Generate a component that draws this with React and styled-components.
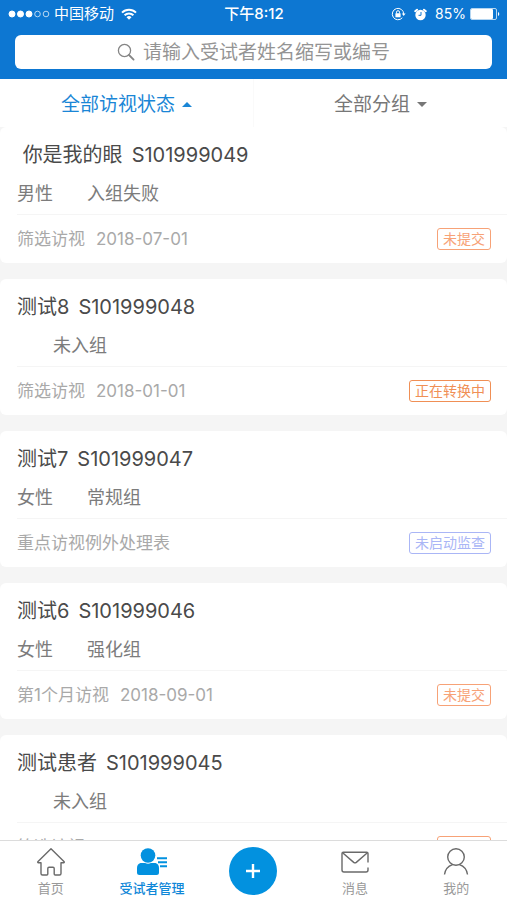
import React, {useState} from 'react';
import styled, {createGlobalStyle} from 'styled-components';

const GlobalStyle = createGlobalStyle`
    * {box-sizing: border-box;}
    body {
        margin: 0;
        font-family: Inter, "Noto Sans CJK SC", sans-serif;
        background-color: #f5f5f5;
    }
    button, input {
        font-family: inherit;
        border: 0;
        padding: 0;
        background: none;
    }
`;

const Screen = styled.div`
    height: 100vh;
    display: flex;
    flex-direction: column;
`;

const Header = styled.header`
    background-color: #0d77d2;
    padding-bottom: 10px;
`;

const StatusBar = styled.div`
    display: grid;
    grid-template-columns: 1fr auto 1fr;
    align-items: center;
    height: 28px;
    padding: 0 7px 0 8px;
    margin-bottom: 7px;
    color: #fff;
    font-size: 14px;
    line-height: 20px;
`;

const StatusGroup = styled.div`
    display: flex;
    align-items: center;
    justify-content: ${props => props.$end ? 'flex-end' : 'flex-start'};
    gap: ${props => props.$end ? 8 : 4}px;
`;

const Carrier = styled.span`
    font-size: 15px;
    margin-right: 3px;
`;

const Time = styled.span`
    font-weight: 500;
    font-size: 15px;
`;

const Power = styled.span`
    display: flex;
    align-items: center;
    gap: 4px;
`;

const SearchBox = styled.label`
    display: flex;
    align-items: center;
    justify-content: center;
    gap: 8px;
    height: 34px;
    margin: 0 15px;
    border-radius: 6px;
    background-color: #fff;
`;

const SearchInput = styled.input`
    width: 13em;
    padding-top: 2px;
    font-size: 19px;
    line-height: 28px;
    color: #444;
    outline: none;
    &::placeholder {
        color: #949494;
        opacity: 1;
    }
`;

const Filters = styled.div`
    display: flex;
    height: 48px;
    background-color: #fff;
`;

const Filter = styled.button`
    flex: 1;
    display: flex;
    align-items: center;
    justify-content: center;
    gap: 7px;
    padding-top: 3px;
    font-size: 19px;
    line-height: 28px;
    color: ${props => props.$active ? '#1a86d6' : '#777'};
    & + & {border-left: 1px solid #fafafa;}
`;

const Caret = styled.span`
    border: 5px solid transparent;
    border-top-width: ${props => props.$up ? 0 : 5}px;
    border-bottom-width: ${props => props.$up ? 5 : 0}px;
    border-top-color: currentColor;
    border-bottom-color: currentColor;
`;

const List = styled.main`
    flex: 1;
    min-height: 0;
    overflow-y: auto;
    scrollbar-width: none;
    display: flex;
    flex-direction: column;
    gap: 16px;
`;

const Card = styled.article`
    flex: none;
    padding-left: 17px;
    border-radius: 6px;
    background-color: #fff;
`;

const CardTop = styled.div`
    padding: 14px 0 6px;
    border-bottom: 1px solid #f5f5f5;
`;

const Title = styled.h2`
    display: flex;
    gap: 9px;
    margin: 0 0 11px;
    font-size: 20px;
    line-height: 28px;
    font-weight: 400;
    color: #4a4a4a;
    white-space: pre;
`;

const Meta = styled.div`
    display: flex;
    gap: 34px;
    padding-left: ${props => props.$indent ? 36 : 0}px;
    font-size: 18px;
    line-height: 28px;
    color: #7c7c7c;
`;

const CardFoot = styled.div`
    display: flex;
    align-items: center;
    justify-content: space-between;
    height: 48px;
    padding-right: 16px;
`;

const Visit = styled.div`
    display: flex;
    gap: 11px;
    font-size: 17px;
    line-height: 24px;
    color: #a9a9a9;
`;

const badgeColors = {
    pending: '#f7a277',
    converting: '#f08f55',
    idle: '#aab6f6',
};

const Badge = styled.span`
    padding: 0 5px;
    border: 1px solid;
    border-radius: 3px;
    font-size: 14px;
    line-height: 20px;
    color: ${props => badgeColors[props.$kind]};
`;

const TabBar = styled.nav`
    display: grid;
    grid-template-columns: repeat(5, 1fr);
    height: 60px;
    border-top: 1px solid #dcdcdc;
    background-color: #fff;
`;

const Tab = styled.button`
    display: flex;
    flex-direction: column;
    align-items: center;
    padding-top: 6px;
    gap: 1px;
    font-size: 13px;
    line-height: 20px;
    font-weight: ${props => props.$active ? 500 : 400};
    color: ${props => props.$active ? '#0f87d8' : '#999'};
    & > svg {color: ${props => props.$active ? '#0291df' : '#6a6a6a'};}
`;

const AddButton = styled.button`
    display: flex;
    align-items: center;
    justify-content: center;
    align-self: center;
    justify-self: center;
    width: 48px;
    height: 48px;
    border-radius: 50%;
    background-color: #0291df;
`;

const SignalDots = () => (
    <svg width="42" height="10" viewBox="0 0 42 10" fill="#fff" stroke="#fff">
        <circle cx="4" cy="5" r="3" />
        <circle cx="12.500" cy="5" r="3" />
        <circle cx="21" cy="5" r="3" />
        <circle cx="29.500" cy="5" r="2.800" fill="none" strokeWidth="0.700" />
        <circle cx="38" cy="5" r="2.800" fill="none" strokeWidth="0.700" />
    </svg>
);

const WifiIcon = () => (
    <svg width="16" height="12" viewBox="0 0 16 12" fill="none" stroke="#fff" strokeWidth="2">
        <path d="M1 4.600a10 10 0 0 1 14 0" />
        <path d="M3.600 7.300a6.200 6.200 0 0 1 8.800 0" />
        <path d="M8 11.800L5.500 9.300a3.500 3.500 0 0 1 5 0z" fill="#fff" stroke="none" />
    </svg>
);

const LockIcon = () => (
    <svg width="15" height="14" viewBox="0 0 15 14" fill="none" stroke="#fff">
        <path d="M11.300 10.800A5.700 5.700 0 1 1 12.700 7" />
        <path d="M10.800 6.500h3.800l-1.900 2.600z" fill="#fff" stroke="none" />
        <rect x="4.400" y="6.300" width="5.200" height="3.900" rx="0.500" fill="#fff" stroke="none" />
        <path d="M5.500 6.500V5.200a1.500 1.500 0 0 1 3 0v1.300" />
    </svg>
);

const AlarmIcon = () => (
    <svg width="13" height="13" viewBox="0 0 13 13" fill="none" stroke="#fff">
        <circle cx="6.500" cy="7" r="5.200" fill="#fff" stroke="none" />
        <path d="M1.200 3.200L3 1.700M11.800 3.200L10 1.700" strokeWidth="2" strokeLinecap="round" />
        <path d="M7 4v3.300H4.500" stroke="#0d77d2" />
    </svg>
);

const BatteryIcon = () => (
    <svg width="30" height="12" viewBox="0 0 30 12" fill="none" stroke="#fff">
        <rect x="0.500" y="0.500" width="26" height="11" rx="1.500" strokeWidth="0.700" />
        <rect x="1" y="1" width="22" height="10" rx="1" fill="#fff" stroke="none" />
        <path d="M28 4a2.200 2.200 0 0 1 0 4z" fill="#fff" stroke="none" />
    </svg>
);

const SearchIcon = () => (
    <svg width="18" height="18" viewBox="0 0 18 18" fill="none" stroke="#858585" strokeWidth="1.300" strokeLinecap="round">
        <circle cx="7.500" cy="7.500" r="6.100" />
        <path d="M12 12l4.600 4.600" strokeWidth="1.800" />
    </svg>
);

const HomeIcon = () => (
    <svg width="30" height="30" viewBox="0 0 30 30" fill="none" stroke="currentColor" strokeWidth="1.400" strokeLinejoin="round">
        <path d="M15 1.700L1.800 14.800Q1.500 15.700 2.300 15.700H5V26.500Q5 28 6.500 28H10.800Q11.800 28 11.800 27V21.500Q11.800 20.300 13 20.300H17Q18.200 20.300 18.200 21.500V27Q18.200 28 19.200 28H23.500Q25 28 25 26.500V15.700H27.700Q28.500 15.700 28.200 14.800Z" />
    </svg>
);

const PatientsIcon = () => (
    <svg width="32" height="30" viewBox="0 0 32 30" fill="currentColor">
        <circle cx="12" cy="8.500" r="7.300" />
        <path d="M4.500 16H9Q12 17.600 15 16H19.500Q23 17 23 21V25.500Q23 28 20.500 28H3.500Q1 28 1 25.500V21Q1 17 4.500 16Z" />
        <path d="M21 10.300h10v2H21zM22 14.300h9v2h-9zM24 18.300h7v2h-7z" />
    </svg>
);

const MailIcon = () => (
    <svg width="30" height="30" viewBox="0 0 30 30" fill="none" stroke="currentColor" strokeWidth="1.400" strokeLinejoin="round">
        <path d="M28 15.500V6.500Q28 5.200 26.700 5.200H3.300Q2 5.200 2 6.500V23Q2 25 4 25H26Q28 25 28 23V20.500" />
        <path d="M2.600 5.800L13.700 15.400Q15 16.400 16.300 15.400L27.400 5.800" />
    </svg>
);

const UserIcon = () => (
    <svg width="30" height="30" viewBox="0 0 30 30" fill="none" stroke="currentColor" strokeWidth="1.400">
        <circle cx="15" cy="10" r="8.300" />
        <path d="M3.500 27.500Q4.500 20 11.500 17.600M26.500 27.500Q25.500 20 18.500 17.600" />
    </svg>
);

const PlusIcon = () => (
    <svg width="14" height="14" viewBox="0 0 14 14" stroke="#fff" strokeWidth="2.400">
        <path d="M7 0v14M0 7h14" />
    </svg>
);

const patients = [
    {name: ' 你是我的眼', code: 'S101999049', sex: '男性', group: '入组失败', visit: '筛选访视', date: '2018-07-01', status: '未提交', kind: 'pending'},
    {name: '测试8', code: 'S101999048', group: '未入组', visit: '筛选访视', date: '2018-01-01', status: '正在转换中', kind: 'converting'},
    {name: '测试7', code: 'S101999047', sex: '女性', group: '常规组', visit: '重点访视例外处理表', status: '未启动监查', kind: 'idle'},
    {name: '测试6', code: 'S101999046', sex: '女性', group: '强化组', visit: '第1个月访视', date: '2018-09-01', status: '未提交', kind: 'pending'},
    {name: '测试患者', code: 'S101999045', group: '未入组', visit: '筛选访视', status: '未提交', kind: 'pending'},
];

const filters = ['全部访视状态', '全部分组'];

const Patient = ({name, code, sex, group, visit, date, status, kind}) => (
    <Card>
        <CardTop>
            <Title><span>{name}</span><span>{code}</span></Title>
            <Meta $indent={!sex}>
                {sex && <span>{sex}</span>}
                <span>{group}</span>
            </Meta>
        </CardTop>
        <CardFoot>
            <Visit>
                <span>{visit}</span>
                {date && <time dateTime={date}>{date}</time>}
            </Visit>
            <Badge $kind={kind}>{status}</Badge>
        </CardFoot>
    </Card>
);

export default () => {
    const [filter, setFilter] = useState(0);
    const [tab, setTab] = useState('patients');

    const renderTab = (id, label, Icon) => (
        <Tab type="button" $active={tab === id} onClick={() => setTab(id)}>
            <Icon />
            {label}
        </Tab>
    );

    return (
        <Screen>
            <GlobalStyle />
            <Header>
                <StatusBar>
                    <StatusGroup>
                        <SignalDots />
                        <Carrier>中国移动</Carrier>
                        <WifiIcon />
                    </StatusGroup>
                    <Time>下午8:12</Time>
                    <StatusGroup $end>
                        <LockIcon />
                        <AlarmIcon />
                        <Power>85%<BatteryIcon /></Power>
                    </StatusGroup>
                </StatusBar>
                <SearchBox>
                    <SearchIcon />
                    <SearchInput type="text" aria-label="搜索" placeholder="请输入受试者姓名缩写或编号" />
                </SearchBox>
            </Header>
            <Filters>
                {filters.map((label, i) => (
                    <Filter type="button" key={label} $active={filter === i} onClick={() => setFilter(i)}>
                        {label}
                        <Caret $up={filter === i} />
                    </Filter>
                ))}
            </Filters>
            <List>
                {patients.map(patient => <Patient key={patient.code} {...patient} />)}
            </List>
            <TabBar>
                {renderTab('home', '首页', HomeIcon)}
                {renderTab('patients', '受试者管理', PatientsIcon)}
                <AddButton type="button" aria-label="添加"><PlusIcon /></AddButton>
                {renderTab('messages', '消息', MailIcon)}
                {renderTab('mine', '我的', UserIcon)}
            </TabBar>
        </Screen>
    )
}
